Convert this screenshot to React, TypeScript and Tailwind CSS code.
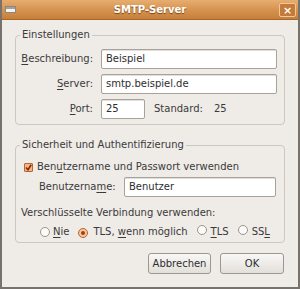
import React from "react";

const font = { fontFamily: '"DejaVu Sans", Verdana, sans-serif' };

function U({ children }: { children: React.ReactNode }) {
  return <span className="underline underline-offset-[2px]">{children}</span>;
}

function Field({ value, className }: { value: string; className: string }) {
  return (
    <div
      className={`h-[20px] rounded-[2px] border border-[#a8a29b] bg-white pl-[4px] leading-[18px] text-[#2e2e2e] shadow-[inset_0_1px_0_#e2ded9] ${className}`}>
      {value}
    </div>
  );
}

function Radio({ checked }: { checked?: boolean }) {
  return (
    <span
      className={`inline-flex h-[10px] w-[10px] items-center justify-center rounded-full border ${
        checked ? "border-[#b8652f] bg-[#f2c7a2]" : "border-[#9b958e] bg-[#fbfaf8]"
      }`}>
      {checked && <span className="h-[4px] w-[4px] rounded-full bg-[#a4400d]" />}
    </span>
  );
}

function Button({ label, className }: { label: string; className: string }) {
  return (
    <div
      className={`flex h-[21px] items-center justify-center rounded-[3px] border border-[#9e978f] bg-gradient-to-b from-[#f9f8f6] to-[#e3dfda] text-[#2e2e2e] ${className}`}>
      {label}
    </div>
  );
}

export default function App() {
  return (
    <div
      style={font}
      className="flex h-[289px] w-[300px] flex-col overflow-hidden border-x-[2px] border-b-[2px] border-[#77726c] bg-[#efebe7] text-[10px] leading-[12px] text-[#3a3a3a]">
      {/* title bar */}
      <div className="relative flex h-[20px] shrink-0 items-center justify-center border-b border-[#a5662c] bg-gradient-to-b from-[#e7ad70] via-[#d69450] to-[#c67f3b]">
        <div className="absolute left-[3px] top-[6px] h-[7px] w-[11px] border border-[#8c8680] bg-[#f4f2ee]">
          <div className="h-[2px] bg-[#a6a19b]" />
        </div>
        <span className="font-bold text-white [text-shadow:0_1px_1px_#7a4414]">SMTP-Server</span>
        <div className="absolute right-[2px] top-[3px] flex h-[14px] w-[17px] items-center justify-center rounded-[2px] border border-[#f0c89b] bg-[#c47a38] text-[11px] font-bold leading-none text-white">
          ×
        </div>
      </div>

      {/* Einstellungen */}
      <fieldset className="ml-[13px] mt-[9px] w-[270px] rounded-[4px] border border-[#cdc7bf] pb-[5px]">
        <legend className="ml-[4px] px-[2px] leading-[12px]">Einstellungen</legend>
        <div className="mt-[8px] flex flex-col gap-[5px]">
          <div className="flex items-center">
            <div className="w-[77px] text-right">
              <U>B</U>eschreibung:
            </div>
            <Field value="Beispiel" className="ml-[8px] w-[176px]" />
          </div>
          <div className="flex items-center">
            <div className="w-[77px] text-right">
              <U>S</U>erver:
            </div>
            <Field value="smtp.beispiel.de" className="ml-[8px] w-[176px]" />
          </div>
          <div className="flex items-center">
            <div className="w-[77px] text-right">
              <U>P</U>ort:
            </div>
            <Field value="25" className="ml-[8px] w-[44px]" />
            <span className="ml-[9px]">Standard:</span>
            <span className="ml-[11px]">25</span>
          </div>
        </div>
      </fieldset>

      {/* Sicherheit */}
      <fieldset className="ml-[13px] mt-[14px] w-[270px] rounded-[4px] border border-[#cdc7bf] pb-[4px]">
        <legend className="ml-[4px] px-[2px] leading-[12px]">Sicherheit und Authentifizierung</legend>
        <div className="ml-[8px] mt-[10px] flex items-center">
          <span className="flex h-[9px] w-[9px] items-center justify-center rounded-[1px] border border-[#b8652f] bg-[#f0b589]">
            <svg width="7" height="7" viewBox="0 0 7 7">
              <path d="M1 3.5 L3 5.8 L6.2 0.8" fill="none" stroke="#8a2a05" strokeWidth="1.6" />
            </svg>
          </span>
          <span className="ml-[4px]">
            Ben<U>u</U>tzername und Passwort verwenden
          </span>
        </div>
        <div className="ml-[23px] mt-[4px] flex items-center">
          <span className="w-[77px]">
            Benutzerna<U>m</U>e:
          </span>
          <Field value="Benutzer" className="ml-[8px] w-[152px]" />
        </div>
        <div className="ml-[5px] mt-[10px]">Verschlüsselte Verbindung verwenden:</div>
        <div className="ml-[24px] mt-[6px] flex items-center">
          <Radio />
          <span className="ml-[3px]">
            <U>N</U>ie
          </span>
          <span className="ml-[9px]">
            <Radio checked />
          </span>
          <span className="ml-[5px]">
            TLS, <U>w</U>enn möglich
          </span>
          <span className="ml-[9px]">
            <Radio />
          </span>
          <span className="ml-[4px]">
            <U>T</U>LS
          </span>
          <span className="ml-[9px]">
            <Radio />
          </span>
          <span className="ml-[4px]">
            SS<U>L</U>
          </span>
        </div>
      </fieldset>

      <div className="mt-[10px] flex justify-end gap-[9px] pr-[14px]">
        <Button label="Abbrechen" className="w-[63px]" />
        <Button label="OK" className="w-[64px]" />
      </div>
    </div>
  );
}
